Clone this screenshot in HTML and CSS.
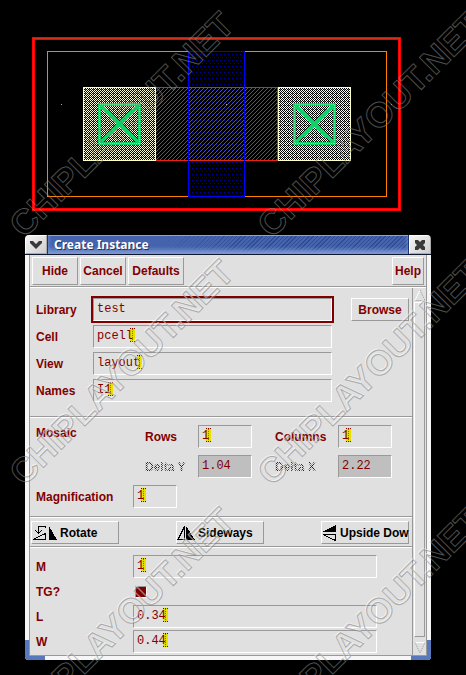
FILE: index.html
```html
<!DOCTYPE html>
<html lang="en">
<head>
<meta charset="utf-8">
<title>Create Instance</title>
<meta name="viewport" content="width=device-width, initial-scale=1">
<link rel="stylesheet" href="styles.css">
</head>
<body>
<svg class="layout-canvas" viewBox="0 0 466 235" role="img" aria-label="Transistor layout" shape-rendering="crispEdges">
  <defs>
    <pattern id="hatch" width="4" height="4" patternUnits="userSpaceOnUse">
      <path d="M0 3h1v1H0zM1 2h1v1H1zM2 1h1v1H2zM3 0h1v1H3z" fill="#f02010"/>
    </pattern>
    <pattern id="dots" width="4" height="6" patternUnits="userSpaceOnUse">
      <path d="M0 0h1v1H0zM2 3h1v1H2z" fill="#0000a0"/>
    </pattern>
    <pattern id="metal" width="4" height="4" patternUnits="userSpaceOnUse">
      <path d="M0 0h1v1H0zM2 0h1v1H2zM1 1h1v1H1zM3 1h1v1H3zM0 2h1v1H0zM2 2h1v1H2zM1 3h1v1H1zM3 3h1v1H3z" fill="#ffffd8"/>
      <path d="M2 2h1v1H2z" fill="#f04028"/>
    </pattern>
    <g id="contact">
      <rect x=".5" y=".5" width="72" height="73" fill="url(#metal)" stroke="#ffffc8"/>
      <g fill="none" stroke="#10d068" stroke-width="3">
        <rect x="16.5" y="17.5" width="40" height="39"/>
        <path d="M17 18L56 56M56 18L17 56" stroke-width="4"/>
        <rect x="16.5" y="17.5" width="40" height="39" stroke="#60f0a0" stroke-width="1" stroke-dasharray="1 1"/>
      </g>
    </g>
  </defs>
  <rect x="33.5" y="38.5" width="366" height="171" fill="none" stroke="#ff0000" stroke-width="3"/>
  <rect x="33.5" y="38.5" width="366" height="171" fill="none" stroke="#d83018" stroke-width="1"/>
  <rect x="47.5" y="51.5" width="339" height="145" fill="none" stroke="#ff8000"/>
  <rect x="188" y="51" width="57" height="146" fill="#000"/>
  <rect x="188" y="51" width="57" height="146" fill="url(#dots)"/>
  <rect x="155.500" y="87.500" width="122" height="73" fill="url(#hatch)" stroke="#f02010"/>
  <rect x="188.500" y="51.500" width="56" height="145" fill="none" stroke="#0000ff"/>
  <use href="#contact" x="83" y="87"/>
  <use href="#contact" x="278" y="87"/>
  <path d="M61 104h1v1h-1zM226 104h1v1h-1zM391 104h1v1h-1z" fill="#aaa"/>
</svg>

<main class="dialog">
  <header class="titlebar">
    <button class="title-button" type="button" aria-label="Window menu">
      <svg width="14" height="10" viewBox="0 0 14 10"><path d="M1 1h3l3 3 3-3h3v2L7 9 1 3z" fill="#3a3a3a"/></svg>
    </button>
    <h1 class="title">Create Instance</h1>
    <button class="title-button" type="button" aria-label="Close">
      <svg width="12" height="12" viewBox="0 0 12 12"><path d="M1 1h3l2 2 2-2h3v3L9 6l2 2v3H8L6 9l-2 2H1V8l2-2-2-2z" fill="#3a3a3a"/></svg>
    </button>
  </header>

  <form class="frame">
    <div class="toolbar">
      <button class="button tall hide" type="button">Hide</button>
      <button class="button tall cancel" type="button">Cancel</button>
      <button class="button tall defaults" type="button">Defaults</button>
      <button class="button tall help" type="button">Help</button>
    </div>

    <div class="workspace">
      <div class="panel">
        <section class="section source">
          <label for="library">Library</label>
          <span class="field focused"><input id="library" type="text" value="test"></span>
          <button class="button browse" type="button">Browse</button>
          <label for="cell">Cell</label>
          <span class="field"><i class="cursor" style="--chars:5"></i><input id="cell" type="text" value="pcell"></span>
          <label for="view">View</label>
          <span class="field"><i class="cursor" style="--chars:6"></i><input id="view" type="text" value="layout"></span>
          <label for="names">Names</label>
          <span class="field"><i class="cursor" style="--chars:2"></i><input id="names" type="text" value="I1"></span>
        </section>

        <section class="section">
          <div class="mosaic">
            <span class="group-name">Mosaic</span>
            <label for="rows">Rows</label>
            <span class="field"><i class="cursor" style="--chars:1"></i><input id="rows" type="text" value="1"></span>
            <label class="columns-label" for="columns">Columns</label>
            <span class="field"><i class="cursor" style="--chars:1"></i><input id="columns" type="text" value="1"></span>
            <label class="muted delta-y" for="dy">Delta Y</label>
            <span class="field off"><input id="dy" type="text" value="1.04" disabled></span>
            <label class="muted columns-label" for="dx">Delta X</label>
            <span class="field off"><input id="dx" type="text" value="2.22" disabled></span>
          </div>
          <div class="magnification">
            <label for="mag">Magnification</label>
            <span class="field"><i class="cursor" style="--chars:1"></i><input id="mag" type="text" value="1"></span>
          </div>
        </section>

        <section class="section transforms">
          <button class="button action" type="button">
            <svg width="25" height="16" viewBox="0 0 25 16" shape-rendering="crispEdges"><path d="M13 1.500H6.500V8M3.500 5.500l3 3 3-3M1 14.500h12.500V8.500zM13 1v2" fill="none" stroke="#000"/><path d="M17 1v14h8z"/></svg>Rotate
          </button>
          <button class="button action" type="button">
            <svg width="18" height="16" viewBox="0 0 18 16" shape-rendering="crispEdges"><path d="M1 14.500h6.500V1.500z" fill="none" stroke="#000"/><path d="M9 1v14h9z"/></svg>Sideways
          </button>
          <button class="button action" type="button">
            <svg width="15" height="20" viewBox="0 0 15 20" shape-rendering="crispEdges"><path d="M0 9h14V2z"/><path d="M1 11.500h12.500v6z" fill="none" stroke="#000"/></svg>Upside Dow
          </button>
        </section>

        <section class="section parameters">
          <label for="m">M</label>
          <span class="field"><i class="cursor" style="--chars:1"></i><input id="m" type="text" value="1"></span>
          <label for="tg">TG?</label>
          <input class="toggle" id="tg" type="checkbox" checked>
          <label for="l">L</label>
          <span class="field"><i class="cursor" style="--chars:4"></i><input id="l" type="text" value="0.34"></span>
          <label for="w">W</label>
          <span class="field"><i class="cursor" style="--chars:4"></i><input id="w" type="text" value="0.44"></span>
        </section>
      </div>

      <div class="scrollbar">
        <button class="arrow" type="button" aria-label="Scroll up">
          <svg width="12" height="12" viewBox="0 0 12 12"><path d="M6 1L1 11.500" stroke="#fff"/><path d="M6 1l5 10.500H1" fill="none" stroke="#999" stroke-dasharray="1 1"/></svg>
        </button>
        <div class="thumb"></div>
        <button class="arrow" type="button" aria-label="Scroll down">
          <svg width="12" height="12" viewBox="0 0 12 12"><path d="M11 .5H1" stroke="#fff"/><path d="M1 .5L6 11l5-10.500" fill="none" stroke="#999" stroke-dasharray="1 1"/></svg>
        </button>
      </div>
    </div>
  </form>
  <span class="grip grip-left"></span>
  <span class="grip grip-right"></span>
</main>

<svg class="watermark" aria-hidden="true">
  <defs>
    <clipPath id="dialog-area"><rect x="26" y="256" width="404" height="403"/></clipPath>
    <g id="marks">
      <text transform="translate(24 239) rotate(-45)">CHIPLAYOUT.NET</text>
      <text transform="translate(272 239) rotate(-45)">CHIPLAYOUT.NET</text>
      <text transform="translate(24 487) rotate(-45)">CHIPLAYOUT.NET</text>
      <text transform="translate(272 487) rotate(-45)">CHIPLAYOUT.NET</text>
      <text transform="translate(24 735) rotate(-45)">CHIPLAYOUT.NET</text>
      <text transform="translate(272 735) rotate(-45)">CHIPLAYOUT.NET</text>
    </g>
  </defs>
  <g clip-path="url(#dialog-area)"><use class="mark-light" href="#marks" x="-1" y="-1"/></g>
  <use class="mark-dark" href="#marks"/>
</svg>
</body>
</html>
```
FILE: styles.css
```css
* { box-sizing: border-box; }

:root {
  --face: #e0e0e0;
  --light: #ffffff;
  --shade: #999999;
  --ink: #800000;
}

body {
  position: relative;
  min-height: 100vh;
  margin: 0;
  overflow: hidden;
  background: #000;
  color: var(--ink);
  font: bold 12px/16px "Liberation Sans", Arial, sans-serif;
}

svg { display: block; flex: none; }

.layout-canvas { width: 100%; }

.dialog {
  position: relative;
  margin: 0 35px 15px 25px;
}

.titlebar {
  display: flex;
  height: 20px;
  overflow: hidden;
  border-bottom: 1px solid #101830;
  border-radius: 4px 4px 0 0;
}

.title-button {
  display: grid;
  place-items: center;
  width: 22px;
  padding: 0;
  border: 1px solid #fff;
  border-right-color: #aaa;
  border-bottom-color: #aaa;
  background: linear-gradient(135deg, #f4f4f4, #cfcfcf);
}

.title {
  flex: 1;
  margin: 0;
  padding-left: 6px;
  border: solid #1c3478;
  border-width: 0 1px;
  background:
    linear-gradient(90deg, #4664ae 110px, transparent 200px),
    repeating-linear-gradient(135deg, #4664ae 0 2px, #2f4c94 2px 3px);
  box-shadow: inset 0 1px #8ca4dc, inset 0 -4px 4px #7f9ad4;
  color: #fff;
  font: bold 12px/20px "Noto Sans", sans-serif;
  text-shadow: 1px 1px #203468;
}

.frame {
  border: 4px solid #f6f6f6;
  border-top: 0;
  border-radius: 0 0 4px 4px;
  background: var(--face);
  box-shadow: inset 1px 0 var(--shade), inset -1px -1px var(--shade);
  padding: 0 1px 1px;
}

.toolbar {
  display: flex;
  gap: 2px;
  padding: 2px 2px 1px;
  border-bottom: 1px solid var(--shade);
  box-shadow: 0 1px var(--light);
}

.button {
  height: 23px;
  padding: 0;
  border: 1px solid;
  border-color: var(--light) var(--shade) var(--shade) var(--light);
  background: var(--face);
  color: inherit;
  font: inherit;
  white-space: nowrap;
}

.tall { height: 28px; }
.hide, .cancel { width: 46px; }
.defaults { width: 56px; }
.help { width: 32px; margin-left: auto; }

.workspace { display: flex; padding-top: 1px; }

.panel { flex: 1; min-width: 0; }

.section + .section {
  border-top: 1px solid var(--shade);
  box-shadow: inset 0 1px var(--light);
}

.source {
  display: grid;
  grid-template-columns: 57px 1fr 58px;
  row-gap: 4px;
  align-items: center;
  padding: 10px 3px 14px 6px;
}

.source label { grid-column: 1; }
.source .field { margin-right: 19px; }

.field {
  position: relative;
  z-index: 0;
  display: block;
  height: 23px;
  border: 1px solid;
  border-color: var(--shade) var(--light) var(--light) var(--shade);
  font: 12px/16px "Liberation Mono", monospace;
}

.field input {
  display: block;
  width: 100%;
  height: 19px;
  padding: 0 3px;
  border: 0;
  outline: 0;
  background: transparent;
  color: var(--ink);
  font: inherit;
}

.focused { outline: 2px solid var(--ink); }
.off { background: #bfbfbf; }

.cursor {
  position: absolute;
  z-index: -1;
  top: 2px;
  left: calc(var(--chars) * 1ch);
  width: 5px;
  height: 14px;
  border: 1px dotted var(--ink);
  border-width: 1px 0;
  background: repeating-linear-gradient(#a06000 0 1px, #e8e000 1px 2px) 2px 0 / 1px 100% no-repeat #e8e000;
}

.mosaic {
  display: grid;
  grid-template-columns: 109px 53px 54px 1fr 54px;
  row-gap: 7px;
  align-items: center;
  padding: 8px 20px 7px 6px;
}

.group-name { align-self: start; }
.columns-label { padding-left: 23px; }
.delta-y { grid-column: 2; }

.muted {
  background: conic-gradient(var(--ink) 25%, transparent 0 50%, var(--ink) 0 75%, transparent 0) 0 0 / 2px 2px;
  background-origin: content-box;
  background-clip: text;
  color: transparent;
}

.magnification {
  display: grid;
  grid-template-columns: 97px 44px;
  align-items: center;
  padding: 0 6px 8px;
}

.transforms {
  display: flex;
  justify-content: space-between;
  padding: 4px 3px 2px 1px;
}

.action {
  display: flex;
  align-items: center;
  gap: 3px;
  width: 88px;
  color: #000;
}

.parameters {
  display: grid;
  grid-template-columns: 97px 1fr;
  row-gap: 2px;
  align-items: center;
  grid-auto-rows: 23px;
  padding: 8px 35px 2px 6px;
}

.toggle {
  width: 12px;
  height: 12px;
  margin: 0 2px;
  appearance: none;
  border: 1px solid;
  border-color: var(--shade) var(--light) var(--light) var(--shade);
  background: var(--ink);
}

.scrollbar {
  display: flex;
  flex-direction: column;
  width: 14px;
  border-left: 1px solid var(--shade);
}

.arrow {
  display: grid;
  place-items: center;
  height: 14px;
  padding: 0;
  border: 0;
  background: var(--face);
}

.thumb {
  flex: 1;
  margin: 0 1px 4px;
  border: 1px solid;
  border-color: var(--light) var(--shade) var(--shade) var(--light);
}

.grip {
  position: absolute;
  bottom: 0;
  width: 20px;
  height: 20px;
  border: 0 solid #5878bc;
  border-bottom-width: 4px;
}

.grip-left { left: 0; border-left-width: 4px; border-bottom-left-radius: 4px; }
.grip-right { right: 0; border-right-width: 4px; border-bottom-right-radius: 4px; }

.watermark {
  position: absolute;
  inset: 0;
  width: 100%;
  height: 100%;
  overflow: hidden;
  pointer-events: none;
  fill: none;
  font: bold 35px "Liberation Sans", Arial, sans-serif;
}

.mark-dark { stroke: rgb(130 130 130 / 60%); }
.mark-light { stroke: rgb(255 255 255 / 55%); }
```
